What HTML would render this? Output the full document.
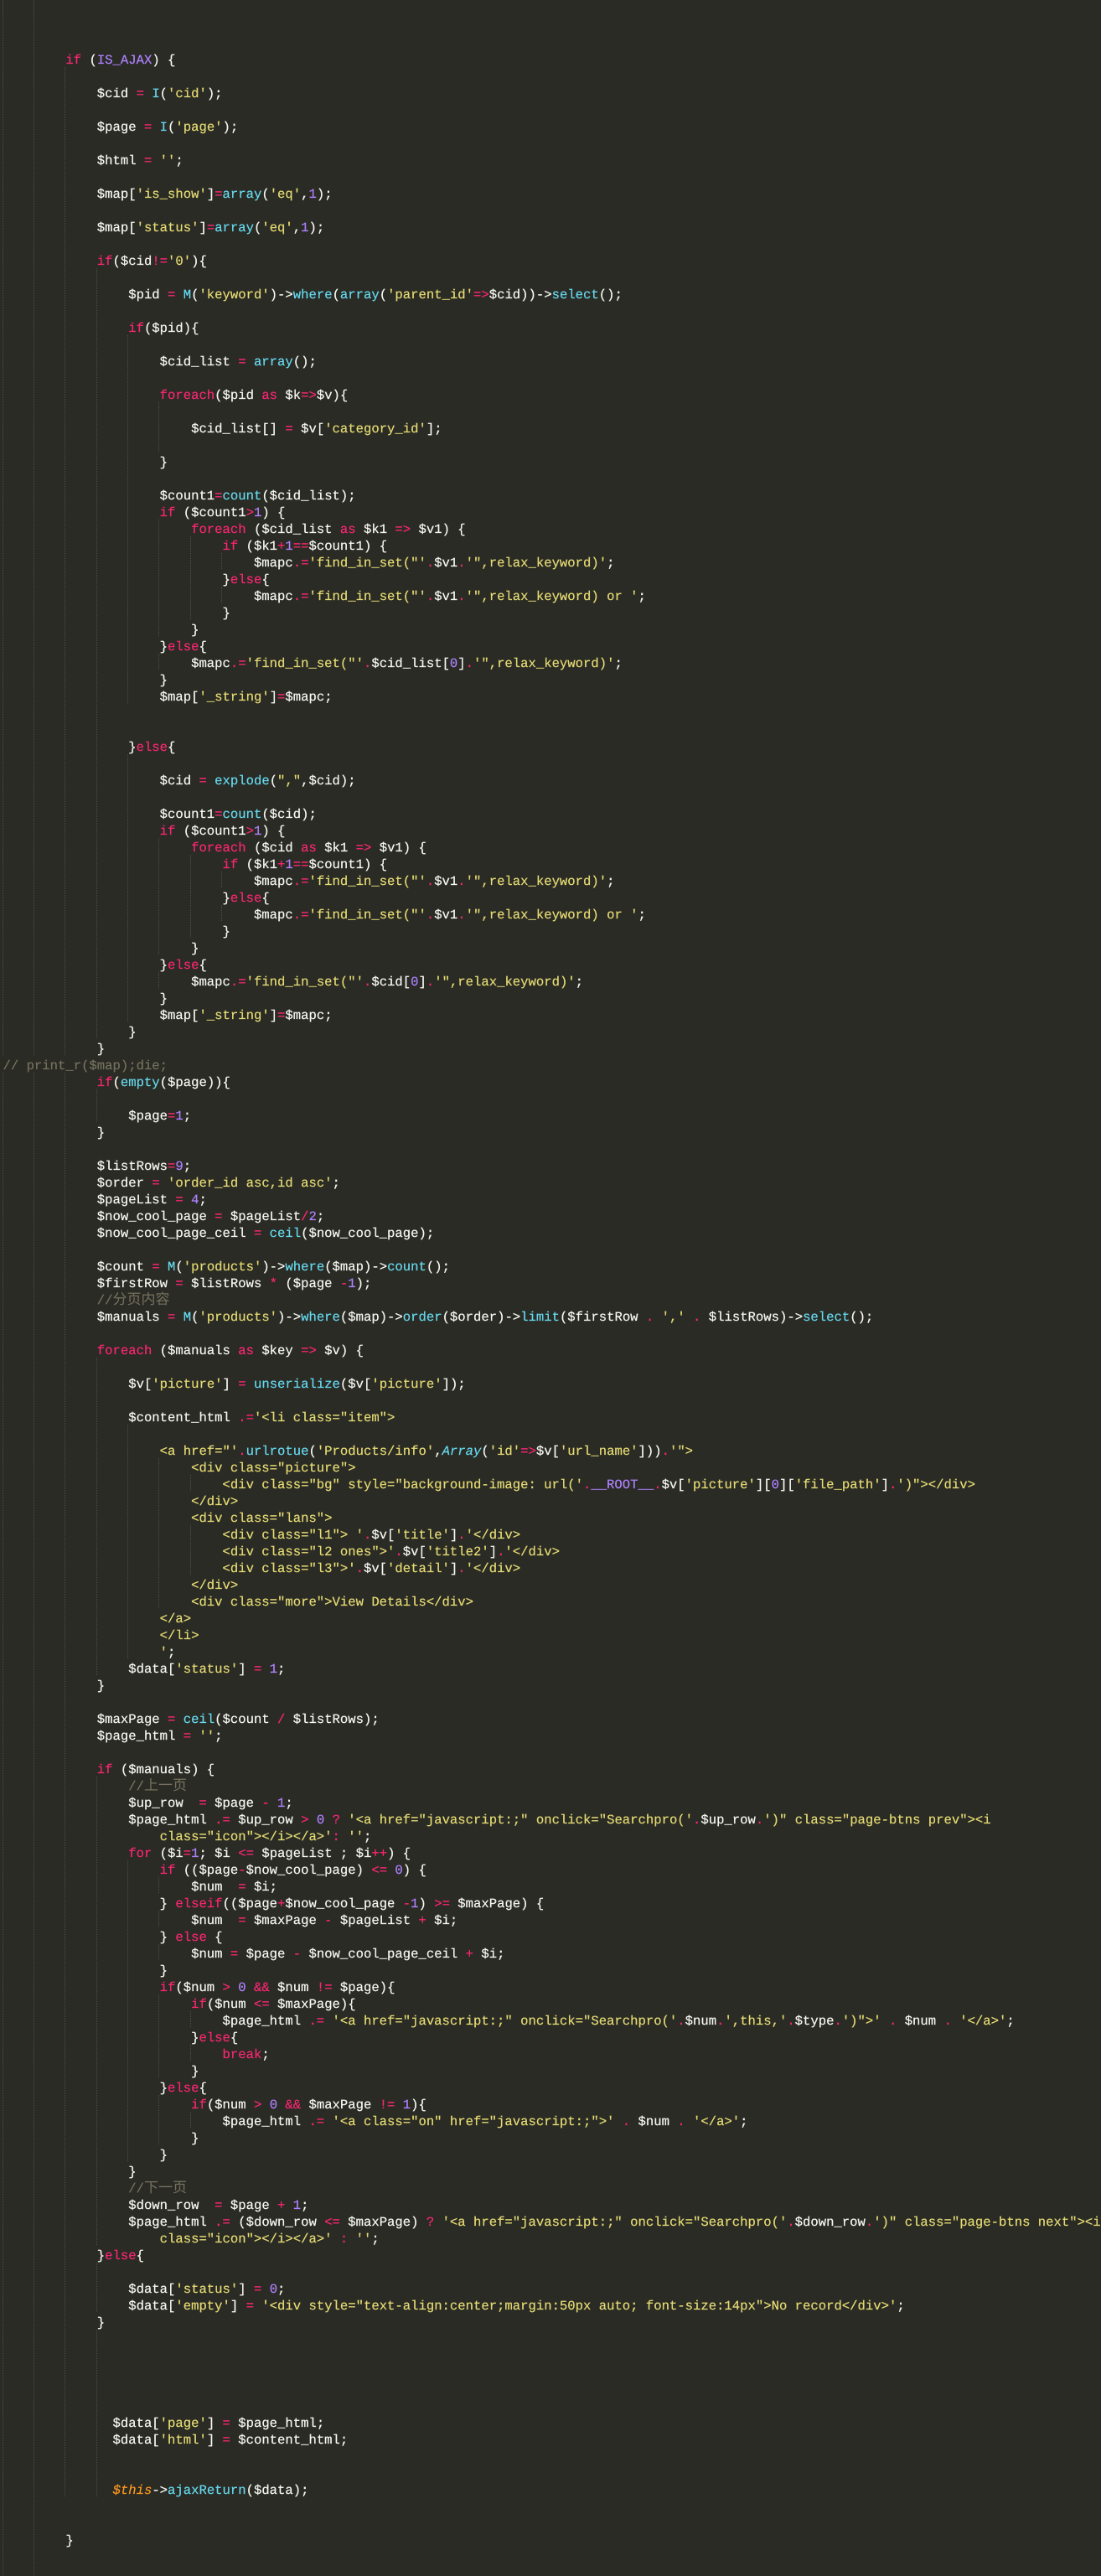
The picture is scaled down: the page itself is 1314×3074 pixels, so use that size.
<!DOCTYPE html>
<html lang="en"><head><meta charset="utf-8"><title>code</title>
<style>
html,body{margin:0;padding:0;background:#2a2b25;width:1314px;height:3074px;overflow:hidden}
#w{position:relative;width:1314px;height:3074px;overflow:hidden}
pre{position:absolute;left:3.5px;top:62px;margin:0;font:15.6px/20px "Liberation Mono","Noto Sans CJK SC",monospace;color:#f8f8f2;text-rendering:geometricPrecision;white-space:pre;-webkit-text-stroke:.2px}
pre b{font-weight:normal;color:#f92672}
pre u{text-decoration:none;color:#66d9ef}
pre q{quotes:none;color:#e6db74}
pre s{text-decoration:none;color:#ae81ff}
pre em{font-style:normal;color:#75715e}
pre em span{font:17px/0 "Noto Sans CJK SC","WenQuanYi Zen Hei",sans-serif;-webkit-text-stroke:0}
pre q::before,pre q::after{content:none}
i.g{position:absolute;width:1px;background:repeating-linear-gradient(to bottom,#4f4f48 0,#4f4f48 1px,transparent 1px,transparent 2px)}
</style></head><body><div id="w">
<i class="g" style="left:3px;top:0;height:1260px"></i><i class="g" style="left:3px;top:1280px;height:1794px"></i>
<i class="g" style="left:40px;top:0;height:1260px"></i><i class="g" style="left:40px;top:1280px;height:1794px"></i>
<i class="g" style="left:77px;top:80px;height:1180px"></i><i class="g" style="left:77px;top:1280px;height:1700px"></i>
<i class="g" style="left:115px;top:320px;height:920px"></i><i class="g" style="left:115px;top:1300px;height:40px"></i><i class="g" style="left:115px;top:1620px;height:380px"></i><i class="g" style="left:115px;top:2120px;height:560px"></i><i class="g" style="left:115px;top:2700px;height:60px"></i><i class="g" style="left:115px;top:2780px;height:200px"></i>
<i class="g" style="left:152px;top:400px;height:440px"></i><i class="g" style="left:152px;top:900px;height:320px"></i><i class="g" style="left:152px;top:1700px;height:280px"></i><i class="g" style="left:152px;top:2220px;height:360px"></i>
<i class="g" style="left:189px;top:480px;height:60px"></i><i class="g" style="left:189px;top:620px;height:140px"></i><i class="g" style="left:189px;top:780px;height:20px"></i><i class="g" style="left:189px;top:1000px;height:140px"></i><i class="g" style="left:189px;top:1160px;height:20px"></i><i class="g" style="left:189px;top:1740px;height:180px"></i><i class="g" style="left:189px;top:2240px;height:20px"></i><i class="g" style="left:189px;top:2280px;height:20px"></i><i class="g" style="left:189px;top:2320px;height:20px"></i><i class="g" style="left:189px;top:2380px;height:100px"></i><i class="g" style="left:189px;top:2500px;height:60px"></i>
<i class="g" style="left:227px;top:640px;height:100px"></i><i class="g" style="left:227px;top:1020px;height:100px"></i><i class="g" style="left:227px;top:1760px;height:20px"></i><i class="g" style="left:227px;top:1820px;height:60px"></i><i class="g" style="left:227px;top:2400px;height:20px"></i><i class="g" style="left:227px;top:2440px;height:20px"></i><i class="g" style="left:227px;top:2520px;height:20px"></i>
<i class="g" style="left:264px;top:660px;height:20px"></i><i class="g" style="left:264px;top:700px;height:20px"></i><i class="g" style="left:264px;top:1040px;height:20px"></i><i class="g" style="left:264px;top:1080px;height:20px"></i>
<pre>        <b>if</b> (<s>IS_AJAX</s>) {

            $cid <b>=</b> <u>I</u>(<q>'cid'</q>);

            $page <b>=</b> <u>I</u>(<q>'page'</q>);

            $html <b>=</b> <q>''</q>;

            $map[<q>'is_show'</q>]<b>=</b><u>array</u>(<q>'eq'</q>,<s>1</s>);

            $map[<q>'status'</q>]<b>=</b><u>array</u>(<q>'eq'</q>,<s>1</s>);

            <b>if</b>($cid<b>!=</b><q>'0'</q>){

                $pid <b>=</b> <u>M</u>(<q>'keyword'</q>)-&gt;<u>where</u>(<u>array</u>(<q>'parent_id'</q><b>=&gt;</b>$cid))-&gt;<u>select</u>();

                <b>if</b>($pid){

                    $cid_list <b>=</b> <u>array</u>();

                    <b>foreach</b>($pid <b>as</b> $k<b>=&gt;</b>$v){

                        $cid_list[] <b>=</b> $v[<q>'category_id'</q>];

                    }

                    $count1<b>=</b><u>count</u>($cid_list);
                    <b>if</b> ($count1<b>&gt;</b><s>1</s>) {
                        <b>foreach</b> ($cid_list <b>as</b> $k1 <b>=&gt;</b> $v1) {
                            <b>if</b> ($k1<b>+</b><s>1</s><b>==</b>$count1) {
                                $mapc<b>.=</b><q>'find_in_set("'</q><b>.</b>$v1<b>.</b><q>'",relax_keyword)'</q>;
                            }<b>else</b>{
                                $mapc<b>.=</b><q>'find_in_set("'</q><b>.</b>$v1<b>.</b><q>'",relax_keyword) or '</q>;
                            }
                        }
                    }<b>else</b>{
                        $mapc<b>.=</b><q>'find_in_set("'</q><b>.</b>$cid_list[<s>0</s>]<b>.</b><q>'",relax_keyword)'</q>;
                    }
                    $map[<q>'_string'</q>]<b>=</b>$mapc;


                }<b>else</b>{

                    $cid <b>=</b> <u>explode</u>(<q>","</q>,$cid);

                    $count1<b>=</b><u>count</u>($cid);
                    <b>if</b> ($count1<b>&gt;</b><s>1</s>) {
                        <b>foreach</b> ($cid <b>as</b> $k1 <b>=&gt;</b> $v1) {
                            <b>if</b> ($k1<b>+</b><s>1</s><b>==</b>$count1) {
                                $mapc<b>.=</b><q>'find_in_set("'</q><b>.</b>$v1<b>.</b><q>'",relax_keyword)'</q>;
                            }<b>else</b>{
                                $mapc<b>.=</b><q>'find_in_set("'</q><b>.</b>$v1<b>.</b><q>'",relax_keyword) or '</q>;
                            }
                        }
                    }<b>else</b>{
                        $mapc<b>.=</b><q>'find_in_set("'</q><b>.</b>$cid[<s>0</s>]<b>.</b><q>'",relax_keyword)'</q>;
                    }
                    $map[<q>'_string'</q>]<b>=</b>$mapc;
                }
            }
<em>// print_r($map);die;</em>
            <b>if</b>(<u>empty</u>($page)){

                $page<b>=</b><s>1</s>;
            }

            $listRows<b>=</b><s>9</s>;
            $order <b>=</b> <q>'order_id asc,id asc'</q>;
            $pageList <b>=</b> <s>4</s>;
            $now_cool_page <b>=</b> $pageList<b>/</b><s>2</s>;
            $now_cool_page_ceil <b>=</b> <u>ceil</u>($now_cool_page);

            $count <b>=</b> <u>M</u>(<q>'products'</q>)-&gt;<u>where</u>($map)-&gt;<u>count</u>();
            $firstRow <b>=</b> $listRows <b>*</b> ($page <b>-</b><s>1</s>);
            <em>//<span>分页内容</span></em>
            $manuals <b>=</b> <u>M</u>(<q>'products'</q>)-&gt;<u>where</u>($map)-&gt;<u>order</u>($order)-&gt;<u>limit</u>($firstRow <b>.</b> <q>','</q> <b>.</b> $listRows)-&gt;<u>select</u>();

            <b>foreach</b> ($manuals <b>as</b> $key <b>=&gt;</b> $v) {

                $v[<q>'picture'</q>] <b>=</b> <u>unserialize</u>($v[<q>'picture'</q>]);

                $content_html <b>.=</b><q>'&lt;li class="item"&gt;</q>

<q>                    &lt;a href="'</q><b>.</b><u>urlrotue</u>(<q>'Products/info'</q>,<u style="font-style:italic">Array</u>(<q>'id'</q><b>=&gt;</b>$v[<q>'url_name'</q>]))<b>.</b><q>'"&gt;</q>
<q>                        &lt;div class="picture"&gt;</q>
<q>                            &lt;div class="bg" style="background-image: url('</q><b>.</b><s>__ROOT__</s><b>.</b>$v[<q>'picture'</q>][<s>0</s>][<q>'file_path'</q>]<b>.</b><q>')"&gt;&lt;/div&gt;</q>
<q>                        &lt;/div&gt;</q>
<q>                        &lt;div class="lans"&gt;</q>
<q>                            &lt;div class="l1"&gt; '</q><b>.</b>$v[<q>'title'</q>]<b>.</b><q>'&lt;/div&gt;</q>
<q>                            &lt;div class="l2 ones"&gt;'</q><b>.</b>$v[<q>'title2'</q>]<b>.</b><q>'&lt;/div&gt;</q>
<q>                            &lt;div class="l3"&gt;'</q><b>.</b>$v[<q>'detail'</q>]<b>.</b><q>'&lt;/div&gt;</q>
<q>                        &lt;/div&gt;</q>
<q>                        &lt;div class="more"&gt;View Details&lt;/div&gt;</q>
<q>                    &lt;/a&gt;</q>
<q>                    &lt;/li&gt;</q>
<q>                    '</q>;
                $data[<q>'status'</q>] <b>=</b> <s>1</s>;
            }

            $maxPage <b>=</b> <u>ceil</u>($count <b>/</b> $listRows);
            $page_html <b>=</b> <q>''</q>;

            <b>if</b> ($manuals) {
                <em>//<span>上一页</span></em>
                $up_row  <b>=</b> $page <b>-</b> <s>1</s>;
                $page_html <b>.=</b> $up_row <b>&gt;</b> <s>0</s> <b>?</b> <q>'&lt;a href="javascript:;" onclick="Searchpro('</q><b>.</b>$up_row<b>.</b><q>')" class="page-btns prev"&gt;&lt;i</q>
<q>                    class="icon"&gt;&lt;/i&gt;&lt;/a&gt;'</q><b>:</b> <q>''</q>;
                <b>for</b> ($i<b>=</b><s>1</s>; $i <b>&lt;=</b> $pageList ; $i<b>++</b>) {
                    <b>if</b> (($page<b>-</b>$now_cool_page) <b>&lt;=</b> <s>0</s>) {
                        $num  <b>=</b> $i;
                    } <b>elseif</b>(($page<b>+</b>$now_cool_page <b>-</b><s>1</s>) <b>&gt;=</b> $maxPage) {
                        $num  <b>=</b> $maxPage <b>-</b> $pageList <b>+</b> $i;
                    } <b>else</b> {
                        $num <b>=</b> $page <b>-</b> $now_cool_page_ceil <b>+</b> $i;
                    }
                    <b>if</b>($num <b>&gt;</b> <s>0</s> <b>&amp;&amp;</b> $num <b>!=</b> $page){
                        <b>if</b>($num <b>&lt;=</b> $maxPage){
                            $page_html <b>.=</b> <q>'&lt;a href="javascript:;" onclick="Searchpro('</q><b>.</b>$num<b>.</b><q>',this,'</q><b>.</b>$type<b>.</b><q>')"&gt;'</q> <b>.</b> $num <b>.</b> <q>'&lt;/a&gt;'</q>;
                        }<b>else</b>{
                            <b>break</b>;
                        }
                    }<b>else</b>{
                        <b>if</b>($num <b>&gt;</b> <s>0</s> <b>&amp;&amp;</b> $maxPage <b>!=</b> <s>1</s>){
                            $page_html <b>.=</b> <q>'&lt;a class="on" href="javascript:;"&gt;'</q> <b>.</b> $num <b>.</b> <q>'&lt;/a&gt;'</q>;
                        }
                    }
                }
                <em>//<span>下一页</span></em>
                $down_row  <b>=</b> $page <b>+</b> <s>1</s>;
                $page_html <b>.=</b> ($down_row <b>&lt;=</b> $maxPage) <b>?</b> <q>'&lt;a href="javascript:;" onclick="Searchpro('</q><b>.</b>$down_row<b>.</b><q>')" class="page-btns next"&gt;&lt;i</q>
<q>                    class="icon"&gt;&lt;/i&gt;&lt;/a&gt;'</q> <b>:</b> <q>''</q>;
            }<b>else</b>{

                $data[<q>'status'</q>] <b>=</b> <s>0</s>;
                $data[<q>'empty'</q>] <b>=</b> <q>'&lt;div style="text-align:center;margin:50px auto; font-size:14px"&gt;No record&lt;/div&gt;'</q>;
            }





              $data[<q>'page'</q>] <b>=</b> $page_html;
              $data[<q>'html'</q>] <b>=</b> $content_html;


              <span style="color:#fd971f;font-style:italic">$this</span>-&gt;<u>ajaxReturn</u>($data);


        }
</pre>
</div></body></html>
